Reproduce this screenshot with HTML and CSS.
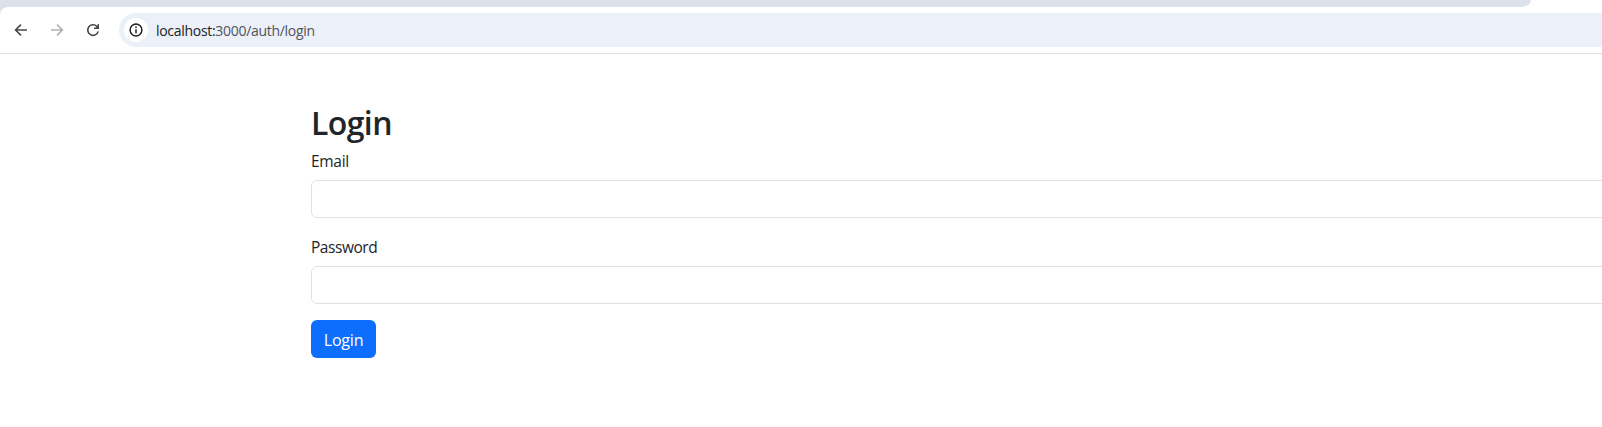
FILE: index.html
```html
<!DOCTYPE html>
<html lang="en">
<head>
<meta charset="utf-8">
<title>Login</title>
<link rel="stylesheet" href="styles.css">
</head>
<body>
<header class="browser">
  <div class="tab-strip"><div class="tab-strip-fill"></div></div>
  <div class="toolbar">
    <svg class="nav-icon" viewBox="0 0 16 16"><path d="M14 8H3M8 2.6 2.6 8 8 13.4"/></svg>
    <svg class="nav-icon nav-icon-disabled" viewBox="0 0 16 16"><path d="M2 8h11M8 2.6 13.4 8 8 13.4"/></svg>
    <svg class="nav-icon" viewBox="0 0 16 16"><path d="M13.2 9.4A5.3 5.3 0 1 1 11.8 4.3L12.8 5.4"/><path class="nav-icon-tip" d="M14 2v5H9V5.6h2L12.6 4V2z"/></svg>
    <div class="address">
      <span class="site-info">
        <svg class="info-icon" viewBox="0 0 14 14"><circle cx="7" cy="7" r="5.9"/><path d="M7 6.2v4M7 3.6v1.5"/></svg>
      </span>
      <span class="url"><span class="host">localhost:</span><span class="path">3000/auth/login</span></span>
    </div>
  </div>
</header>
<main class="page">
  <h2 class="title">Login</h2>
  <form class="form">
    <div class="field">
      <label class="label label-email" for="email">Email</label>
      <input class="input" id="email" type="email">
    </div>
    <div class="field">
      <label class="label" for="password">Password</label>
      <input class="input" id="password" type="password">
    </div>
    <button class="button" type="button">Login</button>
  </form>
</main>
</body>
</html>
```
FILE: styles.css
```css
* { box-sizing: border-box; }
body {
  margin: 0;
  height: 427px;
  overflow: hidden;
  background: #fff;
  color: #212529;
  font-family: "Open Sans", "Noto Sans", sans-serif;
}
/* The toolbar's rounded corner shows the tab strip colour behind it. */
.browser {
  height: 54px;
  border-bottom: 1px solid #dfe1e5;
  background: linear-gradient(90deg, #dde1e9 8px, #fff 8px) top / 100% 20px no-repeat;
}
.tab-strip { height: 7px; background: linear-gradient(90deg, #dde1e9 50%, #fff 50%); }
.tab-strip-fill {
  width: 1531px;
  height: 7px;
  background: #dde1e9;
  border-bottom-right-radius: 10px 7px;
}
.toolbar {
  display: flex;
  align-items: center;
  height: 46px;
  padding-left: 13px;
  background: #fff;
  border-top-left-radius: 8px;
}
.nav-icon {
  flex: none;
  width: 16px;
  height: 16px;
  margin-right: 20px;
  fill: none;
  stroke: #474747;
  stroke-width: 1.6;
}
.nav-icon-disabled { stroke: #b0b0b0; }
.nav-icon-tip { fill: #474747; stroke: none; }
.address {
  flex: 1;
  display: flex;
  align-items: center;
  height: 34px;
  margin-left: -2px;
  padding-left: 5px;
  background: #ecf0f9;
  border-radius: 17px 0 0 17px;
}
.site-info {
  display: flex;
  align-items: center;
  justify-content: center;
  width: 24px;
  height: 24px;
  border-radius: 50%;
  background: #fff;
}
.info-icon { width: 14px; height: 14px; fill: none; stroke: #202124; stroke-width: 1.5; }
.url { margin-left: 8px; padding-top: 1px; font-size: 14px; letter-spacing: -0.3px; line-height: 20px; }
.host { color: #202124; }
.path { color: #50545a; }
.page { padding: 48px 0 0 311px; }
.title { margin: 0 0 6px; padding-top: 2px; font-size: 32px; font-weight: 600; line-height: 38px; letter-spacing: -0.6px; }
.form { width: 1320px; }
.field { margin-bottom: 16px; }
.label { display: block; margin-bottom: 7px; padding-top: 1px; font-size: 15.5px; line-height: 24px; letter-spacing: -0.45px; }
.label-email { letter-spacing: -0.3px; }
.input {
  display: block;
  width: 100%;
  height: 38px;
  padding: 6px 12px;
  border: 1px solid #dee2e6;
  border-radius: 6px;
  background: #fff;
  font: inherit;
}
.button {
  display: block;
  width: 65px;
  height: 38px;
  padding: 1px 0 0;
  border: 0;
  border-radius: 6px;
  background: #0d6efd;
  color: #fff;
  font-family: inherit;
  font-size: 16px;
  line-height: 24px;
  letter-spacing: -0.2px;
}
```
